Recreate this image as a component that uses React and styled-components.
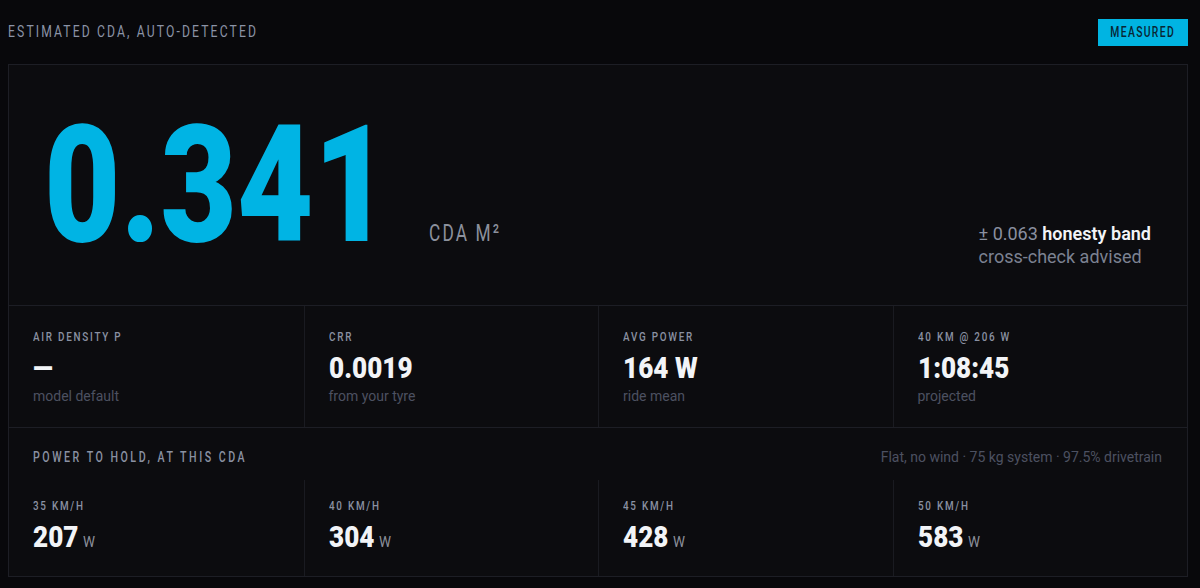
import React from 'react'
import styled, { createGlobalStyle, css } from 'styled-components'

const font = `Roboto, "Liberation Sans", sans-serif`

// narrow display type: squeeze the glyphs horizontally from the left edge
const squeeze = (s, origin = 'left center') => css`
  transform: scaleX(${s});
  transform-origin: ${origin};
  white-space: nowrap;
`

const GlobalStyle = createGlobalStyle`
  html, body {
    margin: 0;
    padding: 0;
    background: #08080b;
  }
  * {
    box-sizing: border-box;
  }
`

const Page = styled.div`
  width: 1200px;
  height: 588px;
  padding: 0 12px 0 8px;
  background: #08080b;
  font-family: ${font};
`

const Header = styled.div`
  display: flex;
  align-items: center;
  justify-content: space-between;
  height: 64px;
`

const Eyebrow = styled.div`
  font-size: 16px;
  line-height: 20px;
  letter-spacing: 2.8px;
  text-transform: uppercase;
  color: #8b93a6;
  ${squeeze(0.76)}
`

const Badge = styled.div`
  display: flex;
  align-items: center;
  justify-content: center;
  width: 90px;
  height: 27px;
  background: #00b4e2;
`

const BadgeText = styled.span`
  display: inline-block;
  font-size: 14px;
  font-weight: 500;
  letter-spacing: 1.8px;
  text-transform: uppercase;
  color: #082634;
  ${squeeze(0.74, 'center')}
`

const Card = styled.div`
  height: 513px;
  border: 1px solid #1d1e25;
  background: #0c0c0f;
  display: flex;
  flex-direction: column;
`

const Hero = styled.div`
  display: flex;
  align-items: flex-end;
  justify-content: space-between;
  height: 241px;
  padding: 0 36px 38px 35px;
  border-bottom: 1px solid #1d1e25;
`

const Reading = styled.div`
  display: flex;
  align-items: baseline;
  gap: 28px;
`

const BigNumber = styled.div`
  font-size: 163px;
  font-weight: 900;
  line-height: 1;
  color: #00b4e4;
  margin-right: -70px;
  ${squeeze(0.81)}
`

const Unit = styled.div`
  font-size: 24px;
  letter-spacing: 3px;
  text-transform: uppercase;
  color: #8c919d;
  ${squeeze(0.72)}
`

const Band = styled.div`
  margin-bottom: -1px;
  font-size: 18px;
  line-height: 23px;
  color: #7c8292;
`

const BandValue = styled.span`
  color: #8a90a0;
`

const BandStrong = styled.span`
  color: #f2f4f7;
  font-weight: 600;
`

const Grid = styled.div`
  display: grid;
  grid-template-columns: repeat(4, 1fr);
`

const StatsRow = styled(Grid)`
  height: 122px;
  border-bottom: 1px solid #1d1e25;
`

const Cell = styled.div`
  padding: ${p => (p.compact ? 18 : 23)}px 24px 0;
  border-left: ${p => (p.first ? 'none' : '1px solid #1a1b21')};
`

const Label = styled.div`
  font-size: ${p => (p.wide ? 14 : 13)}px;
  line-height: 16px;
  font-weight: 500;
  letter-spacing: ${p => (p.wide ? 3.3 : 2.3)}px;
  text-transform: uppercase;
  color: #8a91a2;
  ${squeeze(0.76)}
`

const Value = styled.div`
  margin-top: 8px;
  font-size: 29px;
  line-height: 30px;
  font-weight: 900;
  color: #f2f4f7;
  ${squeeze(0.9)}
`

const ValueUnit = styled.span`
  margin-left: 5px;
  font-size: 15px;
  font-weight: 400;
  color: #8c919d;
`

const Sub = styled.div`
  margin-top: 4px;
  font-size: 14px;
  line-height: 18px;
  color: #4c5161;
`

const Section = styled.div`
  flex: 1;
  display: flex;
  flex-direction: column;
`

const SectionHead = styled.div`
  display: flex;
  align-items: center;
  justify-content: space-between;
  padding: 21px 25px 0 24px;
`

const Note = styled.div`
  font-size: 14px;
  line-height: 16px;
  color: #4c5161;
`

const SpeedRow = styled(Grid)`
  flex: 1;
  margin-top: 15px;
`

const stats = [
  { label: 'Air density ρ', value: '—', sub: 'model default' },
  { label: 'Crr', value: '0.0019', sub: 'from your tyre' },
  { label: 'Avg power', value: '164 W', sub: 'ride mean' },
  { label: '40 km @ 206 W', value: '1:08:45', sub: 'projected' },
]

const speeds = [
  { speed: '35 km/h', watts: 207 },
  { speed: '40 km/h', watts: 304 },
  { speed: '45 km/h', watts: 428 },
  { speed: '50 km/h', watts: 583 },
]

export default function App() {
  return (
    <Page>
      <GlobalStyle />
      <Header>
        <Eyebrow>Estimated CdA, auto-detected</Eyebrow>
        <Badge>
          <BadgeText>Measured</BadgeText>
        </Badge>
      </Header>
      <Card>
        <Hero>
          <Reading>
            <BigNumber>0.341</BigNumber>
            <Unit>CdA m²</Unit>
          </Reading>
          <Band>
            <div>
              <BandValue>± 0.063</BandValue> <BandStrong>honesty band</BandStrong>
            </div>
            <div>cross-check advised</div>
          </Band>
        </Hero>

        <StatsRow>
          {stats.map((s, i) => (
            <Cell key={s.label} first={i === 0}>
              <Label>{s.label}</Label>
              <Value>{s.value}</Value>
              <Sub>{s.sub}</Sub>
            </Cell>
          ))}
        </StatsRow>

        <Section>
          <SectionHead>
            <Label wide>Power to hold, at this CdA</Label>
            <Note>Flat, no wind · 75 kg system · 97.5% drivetrain</Note>
          </SectionHead>
          <SpeedRow>
            {speeds.map((s, i) => (
              <Cell key={s.speed} first={i === 0} compact>
                <Label>{s.speed}</Label>
                <Value>
                  {s.watts}
                  <ValueUnit>W</ValueUnit>
                </Value>
              </Cell>
            ))}
          </SpeedRow>
        </Section>
      </Card>
    </Page>
  )
}
